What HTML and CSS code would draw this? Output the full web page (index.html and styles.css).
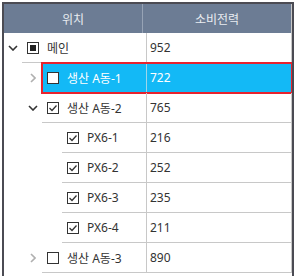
FILE: index.html
```html
<!DOCTYPE html>
<html lang="ko">
<head>
  <meta charset="UTF-8">
  <title>소비전력</title>
  <link rel="stylesheet" href="styles.css">
</head>
<body>
  <div class="tree-grid">
    <div class="grid-header">
      <div class="head-cell name-col">위치</div>
      <div class="head-cell value-col">소비전력</div>
    </div>

    <div class="row lvl-0">
      <span class="expander open">
        <svg viewBox="0 0 10 6" width="10" height="6"><polyline points="1,1 5,5 9,1" /></svg>
      </span>
      <div class="node">
        <div class="name-cell">
          <span class="check partial"></span>
          <span class="label">메인</span>
        </div>
        <div class="value-cell">952</div>
      </div>
    </div>

    <div class="row lvl-1">
      <span class="expander closed">
        <svg viewBox="0 0 6 10" width="6" height="10"><polyline points="1,1 5,5 1,9" /></svg>
      </span>
      <div class="node selected">
        <div class="name-cell">
          <span class="check"></span>
          <span class="label">생산 A동-1</span>
        </div>
        <div class="value-cell">722</div>
      </div>
    </div>

    <div class="row lvl-1">
      <span class="expander open">
        <svg viewBox="0 0 10 6" width="10" height="6"><polyline points="1,1 5,5 9,1" /></svg>
      </span>
      <div class="node">
        <div class="name-cell">
          <span class="check on"><svg viewBox="0 0 10 10" width="10" height="10"><polyline points="1.5,5 4,7.5 8.5,2.5" /></svg></span>
          <span class="label">생산 A동-2</span>
        </div>
        <div class="value-cell">765</div>
      </div>
    </div>

    <div class="row lvl-2">
      <span class="expander"></span>
      <div class="node">
        <div class="name-cell">
          <span class="check on"><svg viewBox="0 0 10 10" width="10" height="10"><polyline points="1.5,5 4,7.5 8.5,2.5" /></svg></span>
          <span class="label">PX6-1</span>
        </div>
        <div class="value-cell">216</div>
      </div>
    </div>

    <div class="row lvl-2">
      <span class="expander"></span>
      <div class="node">
        <div class="name-cell">
          <span class="check on"><svg viewBox="0 0 10 10" width="10" height="10"><polyline points="1.5,5 4,7.5 8.5,2.5" /></svg></span>
          <span class="label">PX6-2</span>
        </div>
        <div class="value-cell">252</div>
      </div>
    </div>

    <div class="row lvl-2">
      <span class="expander"></span>
      <div class="node">
        <div class="name-cell">
          <span class="check on"><svg viewBox="0 0 10 10" width="10" height="10"><polyline points="1.5,5 4,7.5 8.5,2.5" /></svg></span>
          <span class="label">PX6-3</span>
        </div>
        <div class="value-cell">235</div>
      </div>
    </div>

    <div class="row lvl-2">
      <span class="expander"></span>
      <div class="node">
        <div class="name-cell">
          <span class="check on"><svg viewBox="0 0 10 10" width="10" height="10"><polyline points="1.5,5 4,7.5 8.5,2.5" /></svg></span>
          <span class="label">PX6-4</span>
        </div>
        <div class="value-cell">211</div>
      </div>
    </div>

    <div class="row lvl-1">
      <span class="expander closed">
        <svg viewBox="0 0 6 10" width="6" height="10"><polyline points="1,1 5,5 1,9" /></svg>
      </span>
      <div class="node">
        <div class="name-cell">
          <span class="check"></span>
          <span class="label">생산 A동-3</span>
        </div>
        <div class="value-cell">890</div>
      </div>
    </div>
  </div>
</body>
</html>
```
FILE: styles.css
```css
html, body {
  margin: 0;
  height: 100%;
  overflow: hidden;
  background-color: #ffffff;
}
body {
  padding: 2px 2px 0 2px;
  box-sizing: border-box;
  font-family: "Noto Sans", "Noto Sans CJK KR", sans-serif;
  font-size: 12px;
  color: #333333;
}
.tree-grid {
  width: 292px;
  height: 100%;
  overflow: hidden;
  box-sizing: border-box;
  border: 2px solid #4b4b53;
  border-bottom: none;
}
.grid-header {
  display: flex;
  height: 29px;
  background-color: #6c7c94;
  color: #e9ecf1;
}
.head-cell {
  display: flex;
  align-items: center;
  justify-content: center;
}
.head-cell.name-col {
  width: 138px;
  border-right: 1px solid #97a3b5;
}
.head-cell.value-col {
  flex: 1;
  border-right: 1px solid #c8c8c8;
}

.row {
  display: flex;
  height: 30px;
}
.row.lvl-0 { padding-left: 0; }
.row.lvl-1 { padding-left: 20px; }
.row.lvl-2 { padding-left: 40px; }

.expander {
  width: 18px;
  flex-shrink: 0;
  display: flex;
  align-items: center;
  justify-content: center;
}
.expander svg {
  fill: none;
  stroke-width: 1.6;
}
.expander.open svg { stroke: #333333; }
.expander.closed svg { stroke: #b0b0b0; }

.node {
  flex: 1;
  display: flex;
  border-bottom: 1px solid #c8c8c8;
}
.name-cell {
  flex: 1;
  display: flex;
  align-items: center;
  padding-left: 5px;
}
.value-cell {
  width: 146px;
  flex-shrink: 0;
  display: flex;
  align-items: center;
  padding-left: 3px;
  box-sizing: border-box;
  border-left: 1px solid #c8c8c8;
  border-right: 1px solid #c8c8c8;
}

.check {
  width: 12px;
  height: 12px;
  box-sizing: border-box;
  border: 1px solid #333333;
  background-color: #ffffff;
  margin-right: 8px;
  display: flex;
  align-items: center;
  justify-content: center;
  flex-shrink: 0;
}
.check.partial::after {
  content: "";
  width: 6px;
  height: 6px;
  background-color: #222222;
}
.check svg {
  fill: none;
  stroke: #333333;
  stroke-width: 1.3;
}

.node.selected {
  background-color: #13b9f6;
  color: #ffffff;
  outline: 2px solid #e8232d;
  outline-offset: -1px;
}
.node.selected .value-cell {
  border-left-color: #9fd6ea;
}
```
